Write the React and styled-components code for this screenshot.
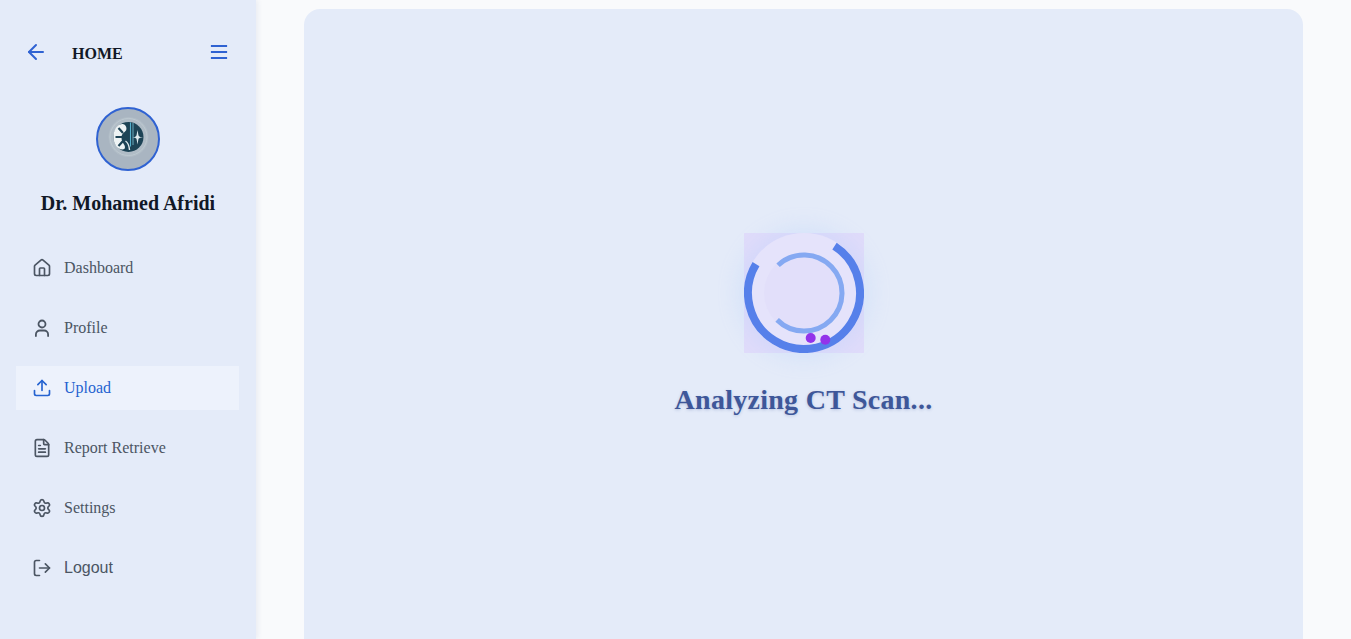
import React from "react";
import styled, { createGlobalStyle } from "styled-components";
import { ArrowLeft, House, Upload, FileText, Settings, LogOut } from "lucide-react";

const Global = createGlobalStyle`
  html, body { margin: 0; padding: 0; height: 100%; overflow: hidden; }
  #root { height: 100%; }
  * { box-sizing: border-box; }
`;

const Page = styled.div`
  display: flex;
  width: 100%;
  height: 639px;
  background: #f9fafc;
  font-family: "Liberation Serif", "Times New Roman", serif;
`;

const Sidebar = styled.aside`
  flex: 0 0 256px;
  padding: 36px 16px 0;
  background: #e4ebf9;
  box-shadow: 2px 0 5px rgba(30, 60, 120, 0.07);
  display: flex;
  flex-direction: column;
`;

const Header = styled.header`
  display: flex;
  align-items: center;
  height: 32px;
  padding: 0 9px 0 8px;
  color: #2f62d2;
`;

const Title = styled.h1`
  margin: 0 0 0 24px;
  flex: 1;
  font-size: 16px;
  font-weight: 700;
  line-height: 32px;
  padding-top: 4px;
  color: #111827;
`;

const Profile = styled.div`
  display: flex;
  flex-direction: column;
  align-items: center;
  margin-top: 39px;
  width: 224px;
`;

const Avatar = styled.div`
  width: 64px;
  height: 64px;
  border-radius: 50%;
  border: 2px solid #2f62d2;
  background: #a9b5c1;
  overflow: hidden;
  display: flex;
`;

const Name = styled.h2`
  margin: 20px 0 0;
  font-size: 20px;
  line-height: 24px;
  font-weight: 700;
  color: #111827;
`;

const Nav = styled.nav`
  display: flex;
  flex-direction: column;
  gap: 16px;
  margin-top: 31px;
  width: 223px;
`;

const Item = styled.a`
  display: flex;
  align-items: center;
  gap: 12px;
  height: 44px;
  padding: 0 16px;
  font-size: 16px;
  font-family: ${(p) => (p.$sans ? '"Liberation Sans", Arial, sans-serif' : "inherit")};
  color: ${(p) => (p.$active ? "#2563d0" : "#4b5563")};
  background: ${(p) => (p.$active ? "#edf2fc" : "transparent")};
`;

const Main = styled.main`
  flex: 1;
  min-width: 0;
  padding: 9px 48px 0;
  display: flex;
`;

const Panel = styled.section`
  width: 999px;
  height: 100%;
  border-radius: 16px 16px 0 0;
  background: #e4ebf9;
  display: flex;
  flex-direction: column;
  align-items: center;
  justify-content: center;
`;

const Spinner = styled.div`
  position: relative;
  z-index: 0;
  width: 120px;
  height: 120px;
  background: #e0dcfa;
  display: flex;

  &::before {
    content: "";
    position: absolute;
    inset: 0;
    z-index: -1;
    border-radius: 50%;
    box-shadow: 0 0 20px 6px rgba(170, 205, 255, 0.25);
  }
`;

const Status = styled.p`
  margin: 32px 0 0;
  font-size: 28px;
  line-height: 30px;
  font-weight: 700;
  letter-spacing: 0.28px;
  color: #3e5799;
  text-shadow: 0 1px 3px rgba(59, 82, 150, 0.25);
`;

function MenuIcon() {
  return (
    <svg width="24" height="24" viewBox="0 0 24 24" fill="none" stroke="currentColor" strokeWidth="2">
      <path d="M3 6h18M3 12h18M3 18h18" transform="translate(12 12) scale(.9 1) translate(-12 -12)" />
    </svg>
  );
}

function PersonIcon() {
  return (
    <svg width="20" height="20" viewBox="0 0 20 20" fill="none" stroke="currentColor" strokeWidth="1.8" strokeLinecap="round">
      <circle cx="10" cy="6" r="3.5" />
      <path d="M3.900 18v-1.500a4 4 0 0 1 4-4h4.200a4 4 0 0 1 4 4V18" />
    </svg>
  );
}

const items = [
  { label: "Dashboard", icon: <House size={20} /> },
  { label: "Profile", icon: <PersonIcon /> },
  { label: "Upload", icon: <Upload size={20} />, active: true },
  { label: "Report Retrieve", icon: <FileText size={20} /> },
  { label: "Settings", icon: <Settings size={20} /> },
  { label: "Logout", icon: <LogOut size={20} />, sans: true },
];

function Logo() {
  return (
    <svg width="60" height="60" viewBox="0 0 60 60">
      <circle cx="30.500" cy="28" r="20" fill="#b0bcc6" />
      <circle cx="30.500" cy="28" r="18.500" fill="none" stroke="#c3cfd5" strokeWidth="0.7" />
      <circle cx="30.500" cy="28" r="15" fill="#1d4355" />
      <path d="M32.500 13.500v24" stroke="#55b2cf" strokeWidth="1.100" />
      <path d="M35 14v22" stroke="#7cc4d8" strokeWidth="0.8" />
      <path d="M24 15c-5 .5-8.500 6-8.500 13s4 12.500 9 12.500c3 0 3-3 1.500-5-1.500-2.500-2.500-4-2.500-7s1.500-4 2.500-5c2-1.500 3-3 2.200-5.500-.7-2.300-2.500-3.200-4.200-3z" fill="#eef3f4" />
      <path d="M24 28h-6.500M25 24l-4.500-5M25 32l-4.500 5" stroke="#1d4355" strokeWidth="2.200" fill="none" />
      <path d="M27.500 32c2.500 1.500 3.500 3.500 4 9" stroke="#dfeaee" strokeWidth="1.400" fill="none" />
      <path d="M34.500 28h2.500l1.500-1.500 1-5.500 1 5.500 1.500 1.500h3l-3 .8-1.500 1-1 5.700-1-5.700-1.500-1z" fill="#dfeaee" />
    </svg>
  );
}

function Loader() {
  const R = 56;
  const r = 38;
  const pt = (rad, deg) => {
    const a = (deg * Math.PI) / 180;
    return `${60 + rad * Math.sin(a)} ${60 - rad * Math.cos(a)}`;
  };
  return (
    <svg width="120" height="120" viewBox="0 0 120 120">
      <circle cx="60" cy="60" r="60" fill="#e5e3fb" />
      <circle cx="60" cy="60" r="40" fill="#e2dffa" />
      <path d={`M${pt(R, 33)} A${R} ${R} 0 1 1 ${pt(R, -59)}`} fill="none" stroke="#5680ea" strokeWidth="8" />
      <path d={`M${pt(r, -43)} A${r} ${r} 0 1 1 ${pt(r, 225)}`} fill="none" stroke="#85a9f2" strokeWidth="5" />
      <circle cx="66.700" cy="105" r="5" fill="#9333ea" />
      <circle cx="81.300" cy="106.700" r="5" fill="#9333ea" />
    </svg>
  );
}

export default function App() {
  return (
    <Page>
      <Global />
      <Sidebar>
        <Header>
          <ArrowLeft size={24} />
          <Title>HOME</Title>
          <MenuIcon />
        </Header>
        <Profile>
          <Avatar><Logo /></Avatar>
          <Name>Dr. Mohamed Afridi</Name>
        </Profile>
        <Nav>
          {items.map(({ label, icon, active, sans }) => (
            <Item key={label} $active={active} $sans={sans}>
              {icon}
              {label}
            </Item>
          ))}
        </Nav>
      </Sidebar>
      <Main>
        <Panel>
          <Spinner><Loader /></Spinner>
          <Status>Analyzing CT Scan...</Status>
        </Panel>
      </Main>
    </Page>
  );
}
